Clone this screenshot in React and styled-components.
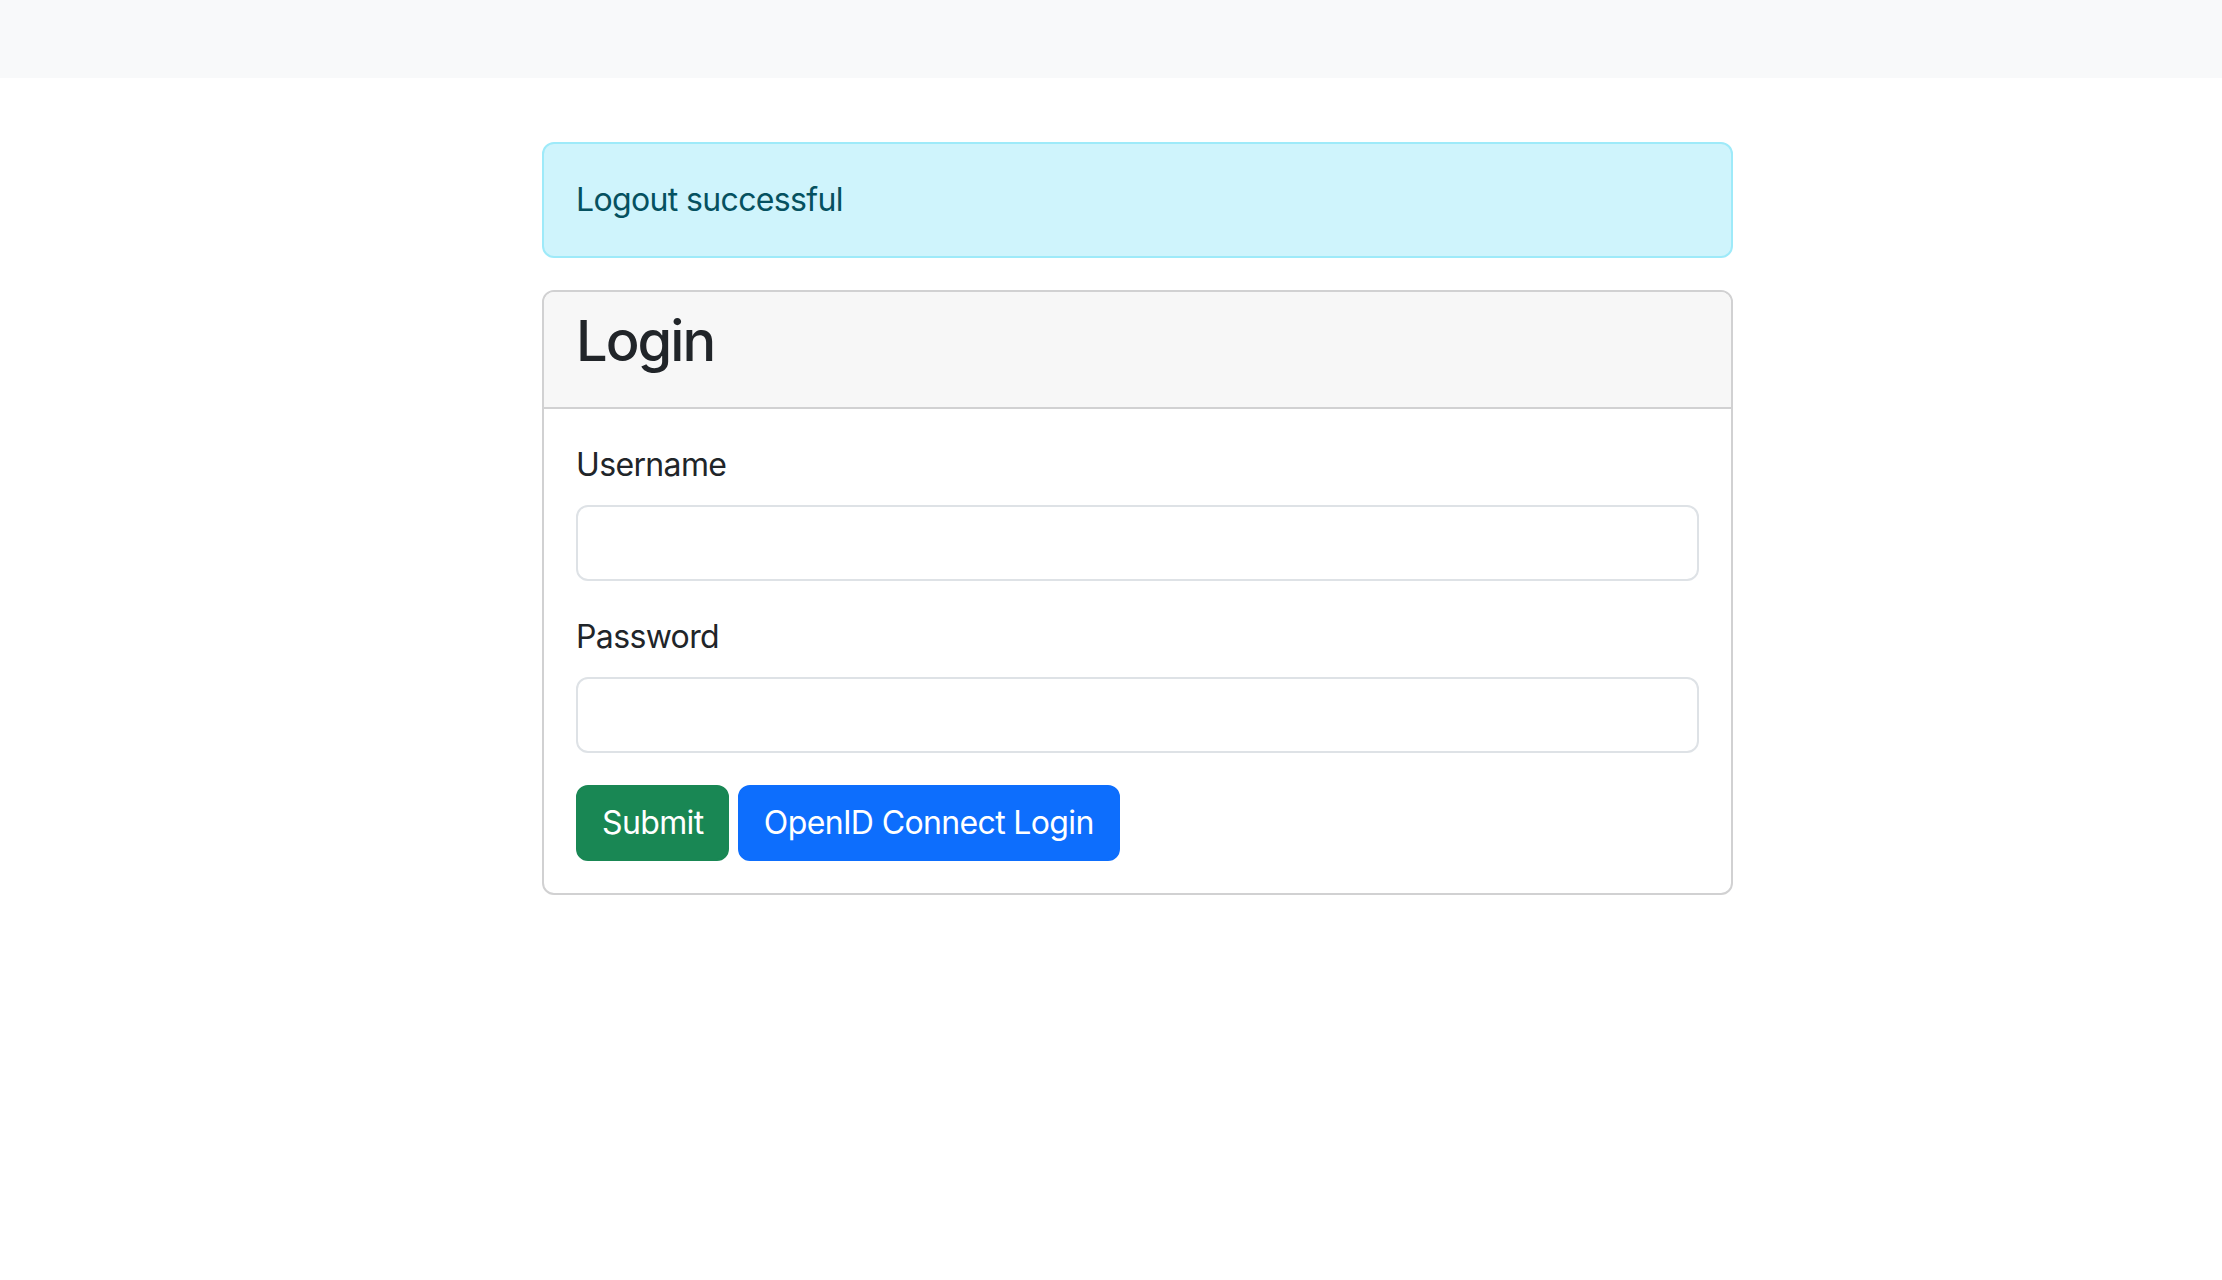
import styled, { createGlobalStyle } from "styled-components";

const GlobalStyle = createGlobalStyle`
  html, body {
    margin: 0;
    padding: 0;
    background: #fff;
  }
  body {
    font-family: Inter, "Helvetica Neue", "Liberation Sans", Arial, sans-serif;
    font-size: 32px;
    line-height: 1.5;
    letter-spacing: -0.02em;
    color: #212529;
  }
  * {
    box-sizing: border-box;
  }
`;

function App() {
  return (
    <>
      <GlobalStyle />
      <Navbar />
      <Main>
        <Column>
          <Alert role="alert">Logout successful</Alert>
          <Card>
            <CardHeader>
              <Title>Login</Title>
            </CardHeader>
            <CardBody>
              <form onSubmit={(e) => e.preventDefault()}>
                <Field>
                  <Label htmlFor="username">Username</Label>
                  <Input id="username" type="text" />
                </Field>
                <Field>
                  <Label htmlFor="password">Password</Label>
                  <Input id="password" type="password" />
                </Field>
                <Actions>
                  <Button type="submit" $variant="success">Submit</Button>{" "}
                  <Button type="button" $variant="primary">OpenID Connect Login</Button>
                </Actions>
              </form>
            </CardBody>
          </Card>
        </Column>
      </Main>
    </>
  );
}

export default App;

const Navbar = styled.nav`
  height: 78px;
  background-color: #f8f9fa;
`;

const Main = styled.main`
  padding: 64px 0 0 542px;
`;

const Column = styled.div`
  width: 1191px;
`;

const Alert = styled.div`
  padding: 32px;
  margin-bottom: 32px;
  border: 2px solid #9eeaf9;
  border-radius: 12px;
  background-color: #cff4fc;
  color: #055160;
`;

const Card = styled.div`
  border: 2px solid #d1d1d2;
  border-radius: 12px;
  overflow: hidden;
  background: #fff;
`;

const CardHeader = styled.div`
  padding: 16px 32px;
  background-color: #f7f7f7;
  border-bottom: 2px solid #d1d1d2;
`;

const Title = styled.h3`
  margin: 0 0 16px;
  font-size: 56px;
  font-weight: 500;
  line-height: 1.2;
  letter-spacing: -0.035em;
`;

const CardBody = styled.div`
  padding: 32px;
`;

const Field = styled.div`
  margin-bottom: 32px;
`;

const Label = styled.label`
  display: inline-block;
  margin-bottom: 16px;
`;

const Input = styled.input`
  display: block;
  width: 100%;
  height: 76px;
  padding: 12px 24px;
  font: inherit;
  color: #212529;
  background: #fff;
  border: 2px solid #dee2e6;
  border-radius: 12px;
  outline: none;
`;

const Actions = styled.div`
  font-size: 32px;
`;

const Button = styled.button`
  display: inline-block;
  padding: 12px 24px;
  font: inherit;
  line-height: 1.5;
  letter-spacing: inherit;
  color: #fff;
  border: 2px solid ${(p) => (p.$variant === "success" ? "#198754" : "#0d6efd")};
  background-color: ${(p) => (p.$variant === "success" ? "#198754" : "#0d6efd")};
  border-radius: 12px;
  cursor: pointer;
  vertical-align: middle;
`;
